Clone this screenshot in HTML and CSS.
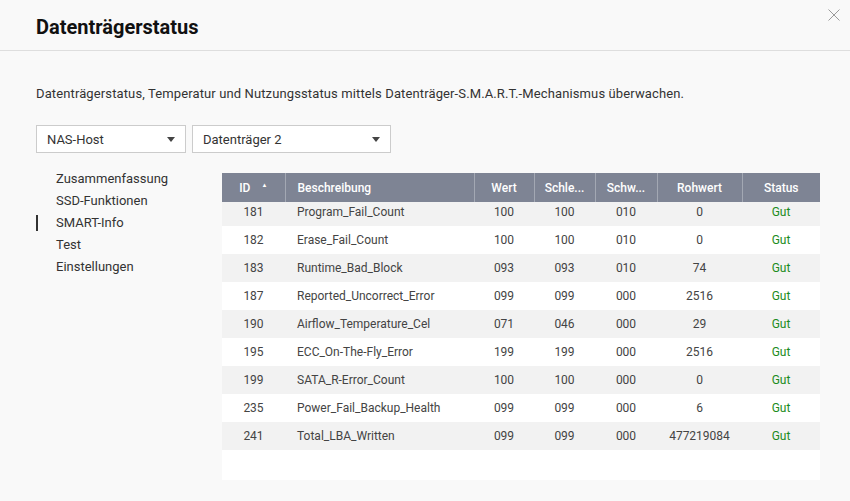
FILE: index.html
```html
<!DOCTYPE html>
<html lang="de">
<head>
    <meta charset="UTF-8">
    <meta name="viewport" content="width=device-width, initial-scale=1.0">
    <title>Datenträgerstatus</title>
    <link rel="stylesheet" href="styles.css">
</head>
<body>
    <header class="dialog-header">
        <h1>Datenträgerstatus</h1>
        <button class="close-button" title="Schließen">
            <svg width="12" height="12" viewBox="0 0 12 12"><path d="M0.5 0.5L11.5 11.5M11.5 0.5L0.5 11.5" stroke="#9a9a9a" stroke-width="1" fill="none"/></svg>
        </button>
    </header>

    <div class="dialog-body">
        <p class="intro">Datenträgerstatus, Temperatur und Nutzungsstatus mittels Datenträger-S.M.A.R.T.-Mechanismus überwachen.</p>

        <div class="selectors">
            <div class="dropdown host"><span>NAS-Host</span><i class="caret"></i></div>
            <div class="dropdown disk"><span>Datenträger 2</span><i class="caret"></i></div>
        </div>

        <div class="content">
            <ul class="side-nav">
                <li>Zusammenfassung</li>
                <li>SSD-Funktionen</li>
                <li class="active">SMART-Info</li>
                <li>Test</li>
                <li>Einstellungen</li>
            </ul>

            <div class="grid">
                <table class="grid-head">
                    <colgroup>
                        <col class="c-id"><col class="c-desc"><col class="c-val"><col class="c-thr"><col class="c-worst"><col class="c-raw"><col class="c-status">
                    </colgroup>
                    <tr>
                        <th>ID <span class="sort">&#9650;</span></th>
                        <th class="left">Beschreibung</th>
                        <th>Wert</th>
                        <th>Schle...</th>
                        <th>Schw...</th>
                        <th>Rohwert</th>
                        <th>Status</th>
                    </tr>
                </table>
                <div class="grid-scroll">
                    <table class="grid-rows">
                        <colgroup>
                            <col class="c-id"><col class="c-desc"><col class="c-val"><col class="c-thr"><col class="c-worst"><col class="c-raw"><col class="c-status">
                        </colgroup>
                        <tr><td>181</td><td class="left">Program_Fail_Count</td><td>100</td><td>100</td><td>010</td><td>0</td><td class="good">Gut</td></tr>
                        <tr><td>182</td><td class="left">Erase_Fail_Count</td><td>100</td><td>100</td><td>010</td><td>0</td><td class="good">Gut</td></tr>
                        <tr><td>183</td><td class="left">Runtime_Bad_Block</td><td>093</td><td>093</td><td>010</td><td>74</td><td class="good">Gut</td></tr>
                        <tr><td>187</td><td class="left">Reported_Uncorrect_Error</td><td>099</td><td>099</td><td>000</td><td>2516</td><td class="good">Gut</td></tr>
                        <tr><td>190</td><td class="left">Airflow_Temperature_Cel</td><td>071</td><td>046</td><td>000</td><td>29</td><td class="good">Gut</td></tr>
                        <tr><td>195</td><td class="left">ECC_On-The-Fly_Error</td><td>199</td><td>199</td><td>000</td><td>2516</td><td class="good">Gut</td></tr>
                        <tr><td>199</td><td class="left">SATA_R-Error_Count</td><td>100</td><td>100</td><td>000</td><td>0</td><td class="good">Gut</td></tr>
                        <tr><td>235</td><td class="left">Power_Fail_Backup_Health</td><td>099</td><td>099</td><td>000</td><td>6</td><td class="good">Gut</td></tr>
                        <tr><td>241</td><td class="left">Total_LBA_Written</td><td>099</td><td>099</td><td>000</td><td>477219084</td><td class="good">Gut</td></tr>
                    </table>
                </div>
            </div>
        </div>
    </div>
</body>
</html>
```

FILE: styles.css
```css
body {
    font-family: Roboto, "Liberation Sans", sans-serif; margin: 0; padding: 0; background-color: #f9f9f9; color: #333;
    font-size: 13px;
}

/* Dialog header */
.dialog-header {
    height: 50px; border-bottom: 1px solid #dedede; display: flex; align-items: center; justify-content: space-between;
    padding: 0 10px 0 36px; position: relative;
}
.dialog-header h1 { margin: 0; font-size: 20px; font-weight: 700; color: #111; padding-top: 3px; }
.close-button {
    position: absolute; right: 10px; top: 9px; background: none; border: none; padding: 0; width: 12px; height: 12px; cursor: pointer;
}
.close-button svg { display: block; }

.dialog-body { padding: 0 30px 0 36px; }
.intro { margin: 35px 0 0; line-height: 16px; font-size: 13px; letter-spacing: 0.12px; color: #333; }

/* Host / disk pickers */
.selectors { display: flex; gap: 6px; margin-top: 23px; }
.dropdown {
    height: 26px; background: #fff; border: 1px solid #ccc; display: flex; align-items: center; justify-content: space-between;
    padding: 0 10px 0 10px; box-sizing: content-box;
}
.dropdown.host { width: 128px; }
.dropdown.disk { width: 177px; }
.caret {
    width: 0; height: 0; border-left: 4px solid transparent; border-right: 4px solid transparent; border-top: 5px solid #444;
}

/* Left menu + table */
.content { display: flex; margin-top: 20px; }
.side-nav { list-style: none; margin: 0; padding: 0; width: 186px; margin-top: -5px; }
.side-nav li { line-height: 22px; padding-left: 20px; position: relative; color: #333; }
.side-nav li.active::before {
    content: ""; position: absolute; left: 0; top: 3px; width: 2px; height: 16px; background: #333;
}

.grid { width: 598px; height: 307px; background: #fff; display: flex; flex-direction: column; }
.grid table { width: 598px; border-collapse: collapse; table-layout: fixed; }
.c-id { width: 63px; }
.c-desc { width: 189px; }
.c-val { width: 60px; }
.c-thr { width: 61px; }
.c-worst { width: 62px; }
.c-raw { width: 85px; }
.c-status { width: 78px; }

.grid-head th {
    height: 29px; padding: 0; background: #7e8494; color: #fff; font-size: 12px; font-weight: 500; text-align: center;
    border-left: 1px solid #a3a8b3; white-space: nowrap;
}
.grid-head th:first-child { border-left: none; }
.grid th.left, .grid td.left { text-align: left; padding-left: 12px; }
.sort { font-size: 6px; vertical-align: 5px; margin-left: 8px; }

.grid-scroll { flex: 1; overflow: hidden; }
.grid-rows { margin-top: -4px; }
.grid-rows td { height: 28px; padding: 0; text-align: center; font-size: 12px; color: #444; white-space: nowrap; }
.grid-rows tr:nth-child(odd) td { background: #f2f2f2; }
.grid-rows td.good { color: #1c8c1c; }
```
